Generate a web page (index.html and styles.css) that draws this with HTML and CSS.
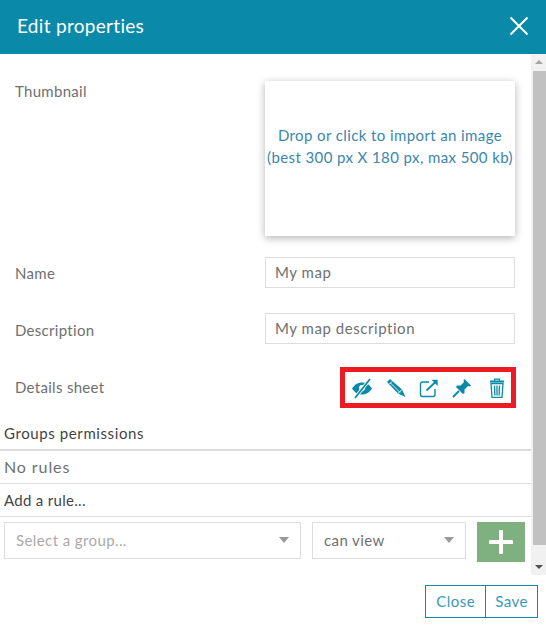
FILE: index.html
```html
<!DOCTYPE html>
<html lang="en">
<head>
  <meta charset="UTF-8">
  <title>Edit properties</title>
  <link rel="stylesheet" href="styles.css">
</head>
<body>

<div class="modal">
  <!-- Header -->
  <div class="modal-header">
    <h2>Edit properties</h2>
    <svg width="20" height="20" viewBox="0 0 20 20"><path d="M1.500 1.500L18.500 18.500M18.500 1.500L1.500 18.500" stroke="#fff" stroke-width="2" fill="none"/></svg>
  </div>

  <!-- Scrolling body -->
  <div class="modal-scroll">
    <div class="modal-body">
      <div class="form-row thumb-row">
        <div class="form-label">Thumbnail</div>
        <div class="dropzone">Drop or click to import an image<br>(best 300 px X 180 px, max 500 kb)</div>
      </div>
      <div class="form-row name-row">
        <div class="form-label">Name</div>
        <div class="text-input">My map</div>
      </div>
      <div class="form-row desc-row">
        <div class="form-label">Description</div>
        <div class="text-input">My map description</div>
      </div>
      <div class="form-row details-row">
        <div class="form-label">Details sheet</div>
        <div class="tools">
          <svg width="22" height="22" viewBox="0 0 22 22"><path d="M1 11.500C4 7 7.500 5.500 11 5.500s7 1.500 10 6c-3 4.500-6.500 6-10 6s-7-1.500-10-6z" fill="#0a8aa8"/><circle cx="11" cy="11" r="3" fill="#fff"/><path d="M4 21L19 2" stroke="#fff" stroke-width="3.500"/><path d="M4 21L19 2" stroke="#0a8aa8" stroke-width="1.800"/></svg>
          <svg width="20" height="20" viewBox="0 0 20 20"><path d="M4 1L1 4 12 15.500 19.500 19 16 11.500z" fill="#0a8aa8"/><path d="M3.500 6L6 3.500M12 15.500L16 11.500" stroke="#fff" stroke-width="1"/><path d="M4.500 5L14 14.500" stroke="#fff" stroke-width=".8"/></svg>
          <svg width="20" height="20" viewBox="0 0 20 20" fill="none" stroke="#0a8aa8"><path d="M10 4H3.500A2 2 0 0 0 1.500 6v10.500a2 2 0 0 0 2 2H14a2 2 0 0 0 2-2V11" stroke-width="1.400"/><path d="M7.500 12.500L17 3.500" stroke-width="1.800"/><path d="M12.500 1.800h6.200V8z" fill="#0a8aa8" stroke="none"/></svg>
          <svg width="20" height="20" viewBox="0 0 20 20"><path d="M12.500 1L19 7.500 17.500 8.500 16 8 12.500 11.500 12.500 15 11 16 4 9 5 7.500 8.500 7.500 12 4 11.500 2.500z" fill="#0a8aa8"/><path d="M1 19L7 13" stroke="#0a8aa8" stroke-width="2"/></svg>
          <svg class="trash" width="16" height="20" viewBox="0 0 16 20"><path d="M1 3.500h14" stroke="#0a8aa8" stroke-width="2"/><path d="M5.500 3V1.200h5V3" fill="none" stroke="#0a8aa8" stroke-width="1.200"/><path d="M2 5.500h12l-1 14H3z" fill="none" stroke="#0a8aa8" stroke-width="1.300"/><path d="M5.500 7.500l.4 10M8 7.500v10M10.500 7.500l-.4 10" stroke="#0a8aa8" stroke-width="1.300"/></svg>
        </div>
      </div>

      <!-- Permissions -->
      <div class="section-title groups-title">Groups permissions</div>
      <div class="no-rules">No rules</div>
      <div class="section-title add-title">Add a rule...</div>
      <div class="rule-form">
        <div class="select select-group"><span class="placeholder">Select a group...</span><i class="caret"></i></div>
        <div class="select select-perm"><span>can view</span><i class="caret"></i></div>
        <div class="add-btn"><svg width="24" height="24" viewBox="0 0 24 24"><path d="M12 1.500v21M1.500 12h21" stroke="#fff" stroke-width="4" stroke-linecap="round"/></svg></div>
      </div>
    </div>

    <div class="scrollbar">
      <div class="arrow arrow-up"></div>
      <div class="thumb"></div>
      <div class="arrow arrow-down"></div>
    </div>
  </div>

  <!-- Footer -->
  <div class="modal-footer">
    <div class="btn-group">
      <div class="btn btn-close">Close</div>
      <div class="btn">Save</div>
    </div>
  </div>
</div>

</body>
</html>
```

FILE: styles.css
```css
body {
  font-family: Lato, "Open Sans", sans-serif;
  margin: 0;
  padding: 0;
  background: #fff;
  color: #707070;
  font-size: 15px;
}
.modal {
  width: 546px;
  height: 628px;
  display: flex;
  flex-direction: column;
  overflow: hidden;
}
.modal-header {
  height: 54px;
  box-sizing: border-box;
  flex: none;
  background: #0a8aa8;
  display: flex;
  align-items: center;
  justify-content: space-between;
  padding: 0 17px 3px;
}
.modal-header h2 {
  margin: 0;
  color: #fff;
  font-size: 19px;
  font-weight: 400;
  letter-spacing: 0.3px;
}
.modal-scroll {
  height: 521px;
  flex: none;
  display: flex;
}
.modal-body {
  flex: 1;
  min-width: 0;
}
.form-row {
  display: flex;
  justify-content: space-between;
  padding: 0 16px 0 15px;
}
.form-label {
  line-height: 20px;
  letter-spacing: 0.3px;
}
.thumb-row {
  padding-top: 27px;
}
.dropzone {
  width: 250px;
  height: 155px;
  box-sizing: border-box;
  box-shadow: 0 2px 8px rgba(0, 0, 0, 0.3);
  color: #3a87ad;
  font-size: 15px;
  line-height: 22px;
  letter-spacing: 0.4px;
  text-align: center;
  white-space: nowrap;
  padding-top: 43px;
}
.name-row {
  margin-top: 21px;
  align-items: center;
}
.desc-row {
  margin-top: 25px;
  align-items: center;
}
.desc-row .form-label {
  margin-top: 2px;
}
.text-input {
  width: 250px;
  height: 31px;
  box-sizing: border-box;
  border: 1px solid #ddd;
  padding: 0 9px;
  line-height: 28px;
  letter-spacing: 0.55px;
}
.details-row {
  margin-top: 23px;
  padding-right: 15px;
  align-items: center;
}
.details-row .form-label {
  margin-bottom: 2px;
}
.tools {
  width: 176px;
  height: 41px;
  box-sizing: border-box;
  border: 5px solid #ed1c24;
  display: flex;
  align-items: center;
  gap: 13px;
  padding-left: 6px;
}
.trash {
  margin-left: 4px;
}
.section-title {
  color: #444;
  padding-left: 4px;
  line-height: 20px;
}
.groups-title {
  margin-top: 15px;
  padding-bottom: 6px;
  border-bottom: 2px solid #ddd;
  letter-spacing: 0.6px;
}
.no-rules {
  padding: 6px 0 6px 4px;
  line-height: 20px;
  border-bottom: 1px solid #ddd;
  letter-spacing: 0.9px;
  font-size: 16px;
}
.add-title {
  padding-top: 6px;
  padding-bottom: 6px;
  border-bottom: 1px solid #ddd;
  letter-spacing: 0.3px;
}
.rule-form {
  display: flex;
  align-items: flex-start;
  padding: 5px 0 0 4px;
}
.select {
  height: 37px;
  box-sizing: border-box;
  border: 1px solid #ddd;
  padding: 0 11px 2px;
  display: flex;
  align-items: center;
  justify-content: space-between;
  letter-spacing: 0.4px;
}
.select-group {
  width: 297px;
}
.select-perm {
  width: 154px;
  margin-left: 11px;
}
.placeholder {
  color: #aaa;
}
.caret {
  width: 0;
  height: 0;
  border-left: 5.500px solid transparent;
  border-right: 5.500px solid transparent;
  border-top: 6px solid #999;
}
.add-btn {
  width: 48px;
  height: 40px;
  box-sizing: border-box;
  padding-bottom: 1px;
  margin-left: 11px;
  background: #7fb07f;
  display: flex;
  align-items: center;
  justify-content: center;
}
.scrollbar {
  width: 15px;
  flex: none;
  background: #f1f1f1;
  display: flex;
  flex-direction: column;
  align-items: flex-end;
}
.arrow {
  width: 0;
  height: 0;
  border-left: 4px solid transparent;
  border-right: 4px solid transparent;
  flex: none;
  margin-right: 3px;
}
.arrow-up {
  border-bottom: 4px solid #a3a3a3;
  margin-top: 6px;
  margin-bottom: 7px;
}
.arrow-down {
  border-top: 4px solid #505050;
  margin-top: auto;
  margin-bottom: 6px;
}
.thumb {
  width: 13px;
  height: 474px;
  background: #c1c1c1;
}
.modal-footer {
  flex: 1;
  display: flex;
  justify-content: flex-end;
  padding: 10px 8px 0 0;
}
.btn-group {
  display: flex;
  height: 33px;
  box-sizing: border-box;
  border: 1px solid #0a8aa8;
}
.btn {
  color: #3a9ab5;
  line-height: 30px;
  padding: 0 9px;
  letter-spacing: 0.5px;
}
.btn-close {
  padding: 0 10px;
}
.btn + .btn {
  border-left: 1px solid #0a8aa8;
}
```
